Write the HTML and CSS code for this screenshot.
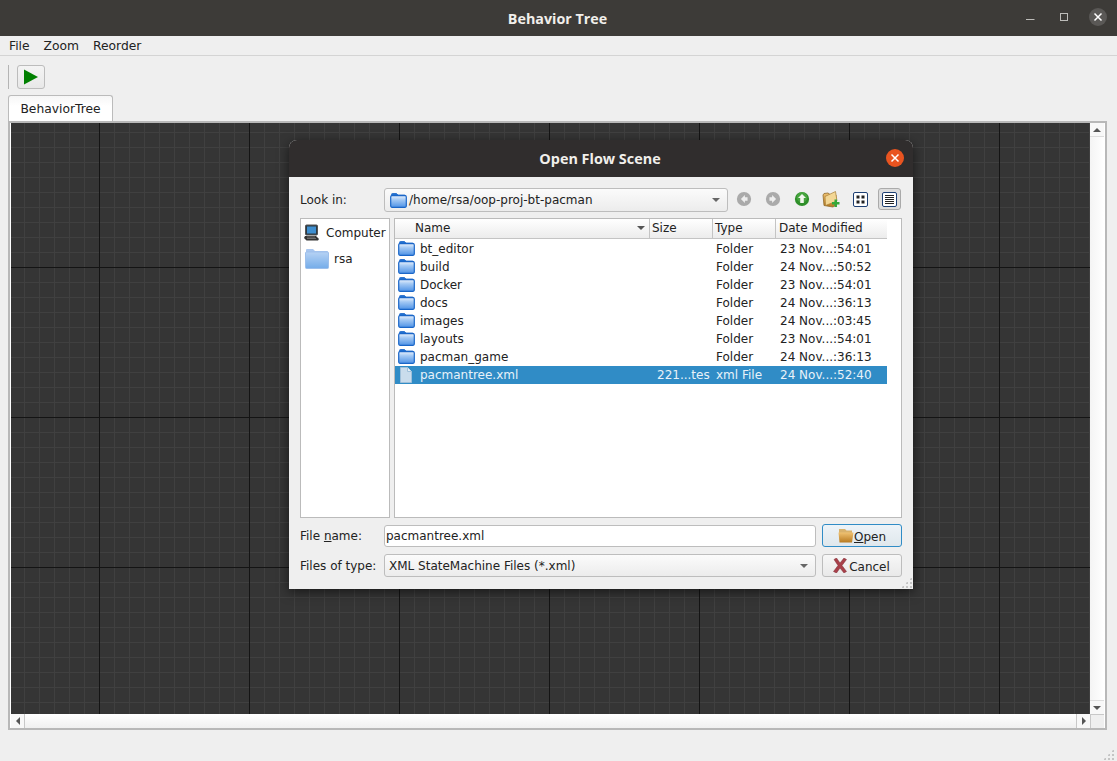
FILE: index.html
```html
<!DOCTYPE html>
<html lang="en">
<head>
<meta charset="utf-8">
<title>Behavior Tree</title>
<link rel="stylesheet" href="styles.css">
</head>
<body>
<svg class="defs" width="0" height="0" aria-hidden="true">
  <defs>
    <linearGradient id="fg" x1="0" y1="0" x2="0" y2="1">
      <stop offset="0" stop-color="#e8f1fc"/>
      <stop offset=".35" stop-color="#a4c9f4"/>
      <stop offset="1" stop-color="#4f93e6"/>
    </linearGradient>
    <linearGradient id="fg2" x1="0" y1="0" x2="0" y2="1">
      <stop offset="0" stop-color="#b6d2f4"/>
      <stop offset="1" stop-color="#74ace9"/>
    </linearGradient>
    <linearGradient id="og" x1="0" y1="0" x2="0" y2="1">
      <stop offset="0" stop-color="#f0c272"/>
      <stop offset="1" stop-color="#b87a20"/>
    </linearGradient>
    <symbol id="folder" viewBox="0 0 17 16">
      <path d="M1.500 4V2.500a1 1 0 0 1 1-1h4l1.500 1.500h6.500a1 1 0 0 1 1 1V4z" fill="#1f6fd0" stroke="#1a66c8" stroke-width=".8"/>
      <rect x=".7" y="3.700" width="15.600" height="11.600" rx="1.200" fill="url(#fg)" stroke="#1a66c8" stroke-width="1.200"/>
    </symbol>
    <symbol id="arrow" viewBox="0 0 18 18">
      <circle cx="9" cy="9" r="8" fill="#aaa"/>
      <path d="M10 4.500 5.500 9l4.500 4.500V11h3V7h-3z" fill="#eee"/>
    </symbol>
  </defs>
</svg>
<div class="app">
  <header class="titlebar">
    <span class="title">Behavior Tree</span>
    <div class="wm">
      <svg class="wm-icon" width="12" height="12" viewBox="0 0 12 12"><path d="M2 8.500h8.500" stroke="#bdbcb9" stroke-width="1"/></svg>
      <svg class="wm-icon" width="12" height="12" viewBox="0 0 12 12"><rect x="2.500" y="2.500" width="7" height="7" fill="none" stroke="#bdbcb9"/></svg>
      <svg class="wm-close" width="18" height="18" viewBox="0 0 18 18"><circle cx="9" cy="9" r="9" fill="#5a5856"/><path d="M5.500 5.500l7 7m0-7l-7 7" stroke="#fff" stroke-width="1.500"/></svg>
    </div>
  </header>
  <nav class="menubar"><span>File</span><span>Zoom</span><span>Reorder</span></nav>
  <div class="toolbar">
    <span class="handle"></span>
    <button class="play" type="button" aria-label="Run">
      <svg width="16" height="16" viewBox="0 0 16 16"><path d="M1 0.500 15 8 1 15.500z" fill="#008000"/></svg>
    </button>
  </div>
  <div class="tabs"><div class="tab">BehaviorTree</div></div>
  <main class="pane">
    <div class="view"></div>
    <div class="vscroll">
      <span class="sbtn"><i class="tri tri-up"></i></span>
      <span class="strack"></span>
      <span class="sbtn"><i class="tri tri-down"></i></span>
    </div>
    <div class="hscroll">
      <span class="sbtn sbtn-h"><i class="tri tri-left"></i></span>
      <span class="strack"></span>
      <span class="sbtn sbtn-h sbtn-end"><i class="tri tri-right"></i></span>
    </div>
    <div class="corner"></div>
  </main>
  <div class="statusbar"><span class="grip grip-main"></span></div>

  <section class="dialog">
    <header class="dlg-title">
      <span>Open Flow Scene</span>
      <svg class="dlg-close" width="18" height="18" viewBox="0 0 18 18"><circle cx="9" cy="9" r="9" fill="#e95420"/><path d="M5.500 5.500l7 7m0-7l-7 7" stroke="#fff" stroke-width="1.500"/></svg>
    </header>
    <div class="dlg-body">
      <div class="look-row">
        <label class="lbl">Look in:</label>
        <div class="combo combo-look">
          <svg class="combo-ic" width="17" height="16"><use href="#folder"/></svg>
          <span class="combo-text">/home/rsa/oop-proj-bt-pacman</span>
          <i class="tri tri-down combo-arrow"></i>
        </div>
        <div class="tools">
          <svg class="tool" width="16" height="16"><use href="#arrow"/></svg>
          <svg class="tool flip" width="16" height="16"><use href="#arrow"/></svg>
          <svg class="tool" width="16" height="16" viewBox="0 0 18 18"><circle cx="9" cy="9" r="8" fill="#2f8f2a"/><circle cx="9" cy="7" r="6" fill="#56b24c" opacity=".6"/><path d="M9 3.500 4.500 8H7v5.500h4V8h2.500z" fill="#f2f6ee"/></svg>
          <svg class="tool" width="18" height="18" viewBox="0 0 18 18"><path d="M1 5 2 15.500l9 1.500 3-2V5L8 4.500 6 3 2 3.500z" fill="url(#og)" stroke="#8f6a2c" stroke-width=".8"/><path d="M3.500 15.500 3 6.500 13.500 1.500 15 11z" fill="#f3d795" stroke="#a67c35" stroke-width=".7"/><path d="M12.500 9.500v2.500h-2.500v2.500h2.500V17h2.500v-2.500h2.500V12h-2.500V9.500z" fill="#35a83a"/></svg>
          <span class="tool-box"><svg width="15" height="15" viewBox="0 0 15 15"><rect x=".5" y=".5" width="14" height="14" rx="1.500" fill="#fff" stroke="#1d3f73"/><path d="M3.500 3.500h3v3h-3zM8.500 3.500h3v3h-3zM3.500 8.500h3v3h-3zM8.500 8.500h3v3h-3z" fill="#222"/></svg></span>
          <span class="tool-box tool-on"><svg width="15" height="15" viewBox="0 0 15 15"><rect x=".5" y=".5" width="14" height="14" rx="1.500" fill="#fff" stroke="#1d3f73"/><path d="M3 3.500h9M3 5.500h9M3 7.500h9M3 9.500h9M3 11.500h9" stroke="#222"/></svg></span>
        </div>
      </div>

      <div class="browser">
        <aside class="side">
          <div class="side-item side-computer">
            <svg width="18" height="18" viewBox="0 0 18 18"><rect x="2.500" y="1" width="12" height="10" rx="1" fill="#2c3a44" stroke="#555"/><rect x="4" y="2.500" width="9" height="7" fill="#3f8fd0"/><path d="M2 12h11l3 3-1 1.500H3.500L1 14z" fill="#343434"/><path d="M4 13h8M4 14.500h9" stroke="#888" stroke-width=".7"/></svg>
            <span>Computer</span>
          </div>
          <div class="side-item side-home">
            <svg width="24" height="21" viewBox="0 0 24 21"><path d="M1 4V2a1 1 0 0 1 1-1h6l2 2h12a1 1 0 0 1 1 1v1z" fill="#a8c6ef"/><rect x=".5" y="4" width="23" height="16.500" rx="1" fill="url(#fg2)" stroke="#9dbfeb"/></svg>
            <span>rsa</span>
          </div>
        </aside>
        <div class="files">
          <div class="row head">
            <span class="hcell hname">Name<i class="tri tri-down sort"></i></span>
            <span class="hcell">Size</span>
            <span class="hcell">Type</span>
            <span class="hcell hdate">Date Modified</span>
          </div>
          <div class="row"><span class="cname"><svg width="17" height="16"><use href="#folder"/></svg>bt_editor</span><span class="csize"></span><span class="ctype">Folder</span><span class="cdate">23 Nov...:54:01</span></div>
          <div class="row"><span class="cname"><svg width="17" height="16"><use href="#folder"/></svg>build</span><span class="csize"></span><span class="ctype">Folder</span><span class="cdate">24 Nov...:50:52</span></div>
          <div class="row"><span class="cname"><svg width="17" height="16"><use href="#folder"/></svg>Docker</span><span class="csize"></span><span class="ctype">Folder</span><span class="cdate">23 Nov...:54:01</span></div>
          <div class="row"><span class="cname"><svg width="17" height="16"><use href="#folder"/></svg>docs</span><span class="csize"></span><span class="ctype">Folder</span><span class="cdate">24 Nov...:36:13</span></div>
          <div class="row"><span class="cname"><svg width="17" height="16"><use href="#folder"/></svg>images</span><span class="csize"></span><span class="ctype">Folder</span><span class="cdate">24 Nov...:03:45</span></div>
          <div class="row"><span class="cname"><svg width="17" height="16"><use href="#folder"/></svg>layouts</span><span class="csize"></span><span class="ctype">Folder</span><span class="cdate">23 Nov...:54:01</span></div>
          <div class="row"><span class="cname"><svg width="17" height="16"><use href="#folder"/></svg>pacman_game</span><span class="csize"></span><span class="ctype">Folder</span><span class="cdate">24 Nov...:36:13</span></div>
          <div class="row selected"><span class="cname"><svg class="file-ic" width="17" height="16" viewBox="0 0 17 16"><path d="M2.500.500h7l4 4v11h-11z" fill="#c9dcec" stroke="#9fc0da"/><path d="M9.500.500v4h4" fill="#e6eff6" stroke="#9fc0da"/></svg>pacmantree.xml</span><span class="csize">221...tes</span><span class="ctype">xml File</span><span class="cdate">24 Nov...:52:40</span></div>
        </div>
      </div>

      <div class="form-row name-row">
        <label class="lbl">File <u>n</u>ame:</label>
        <div class="input">pacmantree.xml</div>
        <button class="btn btn-default" type="button">
          <svg width="16" height="15" viewBox="0 0 16 15"><path d="M1 1h6l1.500 1.500H14V6H1z" fill="#d9b26c"/><path d="M.5 4.500h15l-1.500 10H1.500z" fill="url(#og)"/></svg><span><u>O</u>pen</span>
        </button>
      </div>
      <div class="form-row type-row">
        <label class="lbl">Files of type:</label>
        <div class="combo combo-type">
          <span class="combo-text">XML StateMachine Files (*.xml)</span>
          <i class="tri tri-down combo-arrow"></i>
        </div>
        <button class="btn btn-cancel" type="button">
          <svg width="14" height="15" viewBox="0 0 14 15"><path d="M1 1.500 3.500 0 7 5l4-5 2.500 1.500L9 7.500l4.500 6L11 15 7 10l-3.500 5L.5 13.500 5 7.500z" fill="#a8404a" stroke="#7e2c34" stroke-width=".5"/></svg><span>Cancel</span>
        </button>
      </div>
      <span class="grip grip-dlg"></span>
    </div>
  </section>
</div>
</body>
</html>
```

FILE: styles.css
```css
* { box-sizing: border-box; }
html, body { margin: 0; padding: 0; height: 100%; overflow: hidden; }
body { font-family: "DejaVu Sans", sans-serif; font-size: 12px; color: #222; background: #efefef; }
.defs { position: absolute; }
.app { position: relative; display: flex; flex-direction: column; height: 100vh; background: #efefef; }

.titlebar { position: relative; height: 36px; flex: none; padding-right: 2px; background: #3d3b38; display: flex; align-items: center; justify-content: center; }
.title { font-family: "Open Sans", sans-serif; font-weight: 700; font-size: 14.3px; color: #f1efeb; }
.wm { position: absolute; right: 10px; top: 8px; display: flex; align-items: center; gap: 22px; }
.wm-icon { display: block; }
.wm-close { display: block; margin-left: -3px; }

.menubar { height: 20px; flex: none; display: flex; gap: 14px; padding: 2px 9px 0; align-items: center; border-bottom: 1px solid #d4d4d4; font-size: 12.3px; line-height: 17px; }

.toolbar { height: 39px; flex: none; display: flex; align-items: center; padding: 0 0 0 8px; gap: 7px; }
.handle { width: 2px; height: 24px; border-left: 1px solid #b4b4b4; margin-top: 2px; }
.play { width: 28px; height: 24px; margin-top: 2px; padding: 0; display: flex; align-items: center; justify-content: center; background: linear-gradient(#f4f4f4, #e8e8e8); border: 1px solid #bcbcbc; border-radius: 3px; }

.tabs { height: 26px; flex: none; padding-left: 8px; display: flex; }
.tab { width: 105px; height: 26px; background: linear-gradient(#f6f6f6, #fff 40%); border: 1px solid #bbb; border-bottom: none; border-radius: 3px 3px 0 0; text-align: center; font-size: 12.3px; line-height: 26px; }

.pane { margin: 0 10px 0 8px; height: 609px; flex: none; display: grid; grid-template-columns: 1fr 14px; grid-template-rows: 1fr 14px; padding: 0 1px; border: 2px solid #b8b8b8; background: #fff; background-clip: padding-box; }
.view {
  background-color: #353535;
  background-image:
    linear-gradient(to right, #141414 1px, transparent 1px),
    linear-gradient(to bottom, #141414 1px, transparent 1px),
    linear-gradient(to right, #404040 1px, transparent 1px),
    linear-gradient(to bottom, #404040 1px, transparent 1px);
  background-size: 150px 150px, 150px 150px, 15px 15px, 15px 15px;
  background-position: 88px 144px, 88px 144px, 13px 9px, 13px 9px;
}
.vscroll { display: flex; flex-direction: column; background: linear-gradient(to right, #f4f4f4, #fff); }
.hscroll { display: flex; background: linear-gradient(#fff, #f0f0f0); }
.strack { flex: 1; }
.sbtn { flex: none; width: 14px; height: 14px; display: flex; align-items: center; justify-content: center; background: #f8f8f8; }
.vscroll .sbtn:first-child { border-bottom: 1px solid #ddd; }
.vscroll .sbtn:last-child { border-top: 1px solid #ddd; }
.sbtn-h { border-right: 1px solid #c8c8c8; }
.sbtn-end { border-right: none; border-left: 1px solid #c8c8c8; }
.corner { background: #efefef; border-left: 1px solid #c8c8c8; border-top: 1px solid #c8c8c8; }

.tri { display: block; width: 0; height: 0; border-style: solid; border-color: transparent; }
.tri-up { border-width: 0 4px 4px; border-bottom-color: #555; }
.tri-down { border-width: 4px 4px 0; border-top-color: #555; }
.tri-left { border-width: 4px 4px 4px 0; border-right-color: #555; }
.tri-right { border-width: 4px 0 4px 4px; border-left-color: #555; }

.statusbar { flex: 1; position: relative; }
.grip { position: absolute; width: 11px; height: 11px; background-image: radial-gradient(circle, #c4c4c4 1px, transparent 1.2px); background-size: 4px 4px; clip-path: polygon(100% 0, 100% 100%, 0 100%); }
.grip-main { right: 3px; bottom: 1px; }
.grip-dlg { right: 1px; bottom: 1px; }

.dialog { position: absolute; left: 289px; top: 140px; width: 624px; height: 449px; display: flex; flex-direction: column; border-radius: 8px 8px 0 0; box-shadow: 0 3px 12px rgba(0, 0, 0, .55); overflow: hidden; background: #efefef; }
.dlg-title { position: relative; height: 37px; flex: none; padding-right: 2px; background: #302d2d; color: #f1efeb; font-family: "Open Sans", sans-serif; font-weight: 700; font-size: 14.4px; display: flex; align-items: center; justify-content: center; }
.dlg-close { position: absolute; right: 9px; top: 9px; }
.dlg-body { position: relative; flex: 1; padding: 11px 11px 0; display: flex; flex-direction: column; }

.lbl { flex: none; width: 84px; line-height: 24px; }
.look-row { display: flex; align-items: center; height: 24px; }
.combo { display: flex; align-items: center; height: 24px; background: linear-gradient(#fbfbfb, #ececec); border: 1px solid #bdbdbd; border-radius: 3px; position: relative; }
.combo-look { width: 344px; padding-left: 5px; }
.combo-type { flex: 1; height: 23px; padding-left: 4px; }
.combo-ic { flex: none; margin-right: 2px; }
.combo-text { white-space: nowrap; }
.combo-arrow { position: absolute; right: 7px; top: 9px; border-top-color: #666; }
.tools { display: flex; align-items: center; margin-left: 8px; margin-bottom: 2px; }
.tool { flex: none; display: block; margin-left: 0; }
.tools .tool:nth-child(1) { margin-right: 13px; }
.tools .tool:nth-child(2) { margin-right: 13px; }
.tools .tool:nth-child(3) { margin-right: 12px; }
.tools .tool:nth-child(4) { margin-right: 10px; }
.flip { transform: scaleX(-1); }
.tool-box { flex: none; display: flex; align-items: center; justify-content: center; width: 21px; height: 22px; margin-right: 7px; }
.tool-box:last-child { margin-right: 0; }
.tool-on { width: 23px; background: #dcdcdc; border: 1px solid #aaa; border-radius: 3px; }

.browser { display: flex; margin-top: 6px; height: 300px; gap: 4px; }
.side { width: 90px; flex: none; background: #fff; border: 1px solid #bbb; padding-top: 5px; }
.side-item { display: flex; align-items: center; white-space: nowrap; }
.side-computer { height: 18px; padding-left: 2px; gap: 5px; }
.side-home { height: 21px; margin-top: 6px; padding-left: 4px; gap: 5px; }
.files { flex: 1; background: #fff; border: 1px solid #bbb; padding-right: 14px; }
.row { display: grid; grid-template-columns: 255px 63px 63px 1fr; height: 18px; align-items: center; white-space: nowrap; }
.head { height: 20px; margin-bottom: 1px; background: linear-gradient(#fff, #ececec); border-bottom: 1px solid #c4c4c4; }
.hcell { height: 19px; line-height: 19px; padding-left: 2px; border-right: 1px solid #c4c4c4; position: relative; }
.hcell:last-child { border-right: none; }
.hname { padding-left: 20px; }
.hdate { padding-left: 3px; }
.sort { position: absolute; right: 4px; top: 7px; }
.cname { display: flex; align-items: center; gap: 5px; padding-left: 3px; }
.cname svg { margin-top: -2px; }
.cname .file-ic { margin-top: 0; }
.csize { padding-left: 7px; }
.ctype { padding-left: 3px; }
.cdate { padding-left: 4px; }
.selected { background: #308cc6; color: #e8f2f9; }

.form-row { display: flex; align-items: center; gap: 0; }
.name-row { margin-top: 6px; height: 23px; }
.type-row { margin-top: 7px; height: 23px; }
.input { flex: 1; height: 22px; line-height: 20px; padding-left: 1px; background: #fff; border: 1px solid #bdbdbd; border-radius: 3px; }
.btn { flex: none; width: 80px; height: 23px; margin-left: 6px; padding: 0; display: flex; align-items: center; justify-content: center; font: inherit; color: #222; background: linear-gradient(#f7f7f7, #e9e9e9); border: 1px solid #bdbdbd; border-radius: 3px; }
.btn span { margin-top: 2px; }
.btn-cancel { gap: 2px; padding-right: 1px; }
.btn-default { border-color: #308cc6; background: linear-gradient(#edf3f8, #dfe7ec); }
```
